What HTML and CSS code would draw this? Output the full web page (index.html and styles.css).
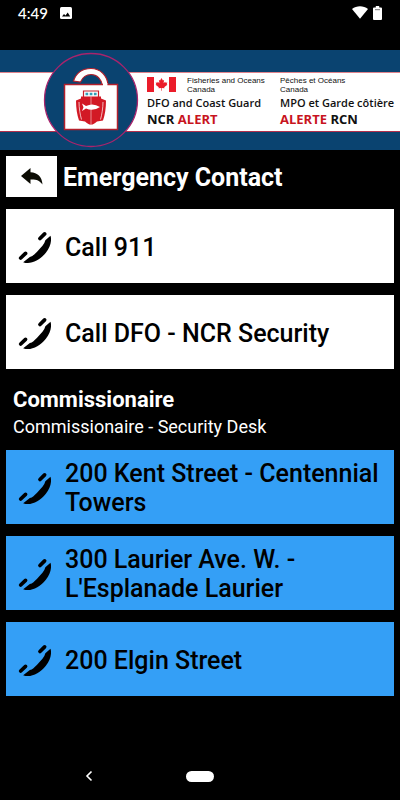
FILE: index.html
```html
<!DOCTYPE html>
<html lang="en">
<head>
    <meta charset="UTF-8">
    <meta name="viewport" content="width=device-width, initial-scale=1.0">
    <title>Emergency Contact</title>
    <link rel="stylesheet" href="styles.css">
</head>
<body>
    <!-- shared icons -->
    <svg class="sprite" aria-hidden="true">
        <symbol id="phone" viewBox="0 0 32 32">
            <path d="M5 30.200 L11.500 25.300 C14 24.500 16 22.500 18.500 20 C22.500 16 25.800 12.500 26.500 9 L31.500 4.500 C33 9 31.500 15.500 27 21 C21 28.500 12 33 5 30.200z"/>
            <path d="M21.300 7.300 L25.800 2.800 M2.600 26.200 L7.300 21.700" stroke="#000" stroke-width="3.600" stroke-linecap="round"/>
        </symbol>
    </svg>

    <div class="status-bar">
        <span class="time">4:49</span>
        <svg class="picture-icon" width="12" height="12" viewBox="0 0 12 12">
            <rect width="12" height="12" rx="1.500" fill="#fff"/>
            <path d="M2 9.500 L4 7 L5.500 8.500 L7.700 5.500 L10.200 9.500z" fill="#000"/>
        </svg>
        <svg class="wifi-icon" width="16" height="13" viewBox="0 0 16 13">
            <path d="M0 3 C4.500 -0.800 11.500 -0.800 16 3 L8 12.800z" fill="#fff"/>
        </svg>
        <svg width="9" height="14" viewBox="0 0 9 14">
            <path d="M1 1.500 H2.800 V0 H6.200 V1.500 H8 Q9 1.500 9 2.500 V13 Q9 14 8 14 H1 Q0 14 0 13 V2.500 Q0 1.500 1 1.500z" fill="#fff"/>
            <path d="M2 3.700 H7" stroke="#777" stroke-width="1"/>
        </svg>
    </div>

    <header class="banner">
        <div class="banner-strip">
            <svg class="emblem" width="96" height="96" viewBox="0 0 96 96">
                <circle cx="48" cy="48" r="46.500" fill="#0a4370" stroke="#a8246c" stroke-width="1.300"/>
                <path d="M65 34 C65 23.500 57 16.500 48 16.500 C39 16.500 33 21.500 30.500 29 L37.500 30 C39.500 25.500 43 22.500 48 22.500 C54 22.500 58.500 27 59.500 34" fill="#fff" stroke="#b3202c" stroke-width="1.200"/>
                <rect x="21.500" y="32.500" width="53" height="45" fill="#fff" stroke="#b3202c" stroke-width="1.500"/>
                <path d="M60 31 H64.400 V36 H60z" fill="#fff"/>
                <path d="M40.500 46 V39 H55.500 V46" fill="#fff" stroke="#c8202b" stroke-width="1.200"/>
                <path d="M42.500 42 H45.200 M46.700 42 H49.400 M50.900 42 H53.600" stroke="#2f9fb8" stroke-width="2.300"/>
                <path d="M33 48.500 L38 46.500 V44.500 H58 V46.500 L63 48.500 C63 56 62 63 60 68.500 L54 69.500 C52 71.500 50 72.500 48 72.800 C46 72.500 44 71.500 42 69.500 L36 68.500 C34 63 33 56 33 48.500z" fill="#d21925"/>
                <path d="M36 50 C36 56 37.200 63 38.500 67.500 M60 50 C60 56 58.800 63 57.500 67.500" fill="none" stroke="#fff" stroke-width="0.700"/>
                <path d="M48 44.500 V73" fill="none" stroke="#fff" stroke-width="0.500"/>
                <path d="M39 51.500 L43 54 Q50 50.500 57 55 Q50 59.800 43 56.500 L39 59 L40.500 55.200z" fill="#fff"/>
            </svg>
            <div class="banner-text" lang="en">
                <div class="department">
                    <svg width="29" height="15" viewBox="0 0 29 15">
                        <path d="M0 0 H7 V15 H0z M22 0 H29 V15 H22z" fill="#eb1c2a"/>
                        <path d="M14.500 1 L15.900 3.600 L17.100 3 L16.600 6.300 L18.200 4.800 L18.600 5.700 L20.300 5.400 L19.700 7.300 L20.400 7.800 L17.200 10.200 L17.500 11.300 L14.800 10.900 V13.800 H14.200 V10.900 L11.500 11.300 L11.800 10.200 L8.600 7.800 L9.300 7.300 L8.700 5.400 L10.400 5.700 L10.800 4.800 L12.400 6.300 L11.900 3 L13.100 3.600z" fill="#eb1c2a"/>
                    </svg>
                    <p>Fisheries and Oceans<br>Canada</p>
                </div>
                <p class="agency">DFO and Coast Guard</p>
                <p class="alert">NCR <span class="red">ALERT</span></p>
            </div>
            <div class="banner-text" lang="fr">
                <div class="department">
                    <p>Pêches et Océans<br>Canada</p>
                </div>
                <p class="agency">MPO et Garde côtière</p>
                <p class="alert"><span class="red">ALERTE</span> RCN</p>
            </div>
        </div>
    </header>

    <main>
        <div class="title-row">
            <button class="back-btn" type="button" aria-label="Back">
                <svg width="22" height="17" viewBox="0 0 22 17">
                    <path d="M0 8 L9.500 0 V4.200 C16.500 4.500 21 8.500 21.500 16.500 C18.500 12.500 15 11.300 9.500 11.600 V16z" fill="#0c0c04"/>
                </svg>
            </button>
            <h1>Emergency Contact</h1>
        </div>

        <div class="contact-list">
            <button class="contact" type="button">
                <svg class="phone-icon"><use href="#phone"/></svg>
                <span>Call 911</span>
            </button>
            <button class="contact" type="button">
                <svg class="phone-icon"><use href="#phone"/></svg>
                <span>Call DFO - NCR Security</span>
            </button>
        </div>

        <div class="section-heading">
            <h2>Commissionaire</h2>
            <p>Commissionaire - Security Desk</p>
        </div>

        <div class="contact-list">
            <button class="contact blue" type="button">
                <svg class="phone-icon"><use href="#phone"/></svg>
                <span>200 Kent Street - Centennial Towers</span>
            </button>
            <button class="contact blue" type="button">
                <svg class="phone-icon"><use href="#phone"/></svg>
                <span>300 Laurier Ave. W. - L'Esplanade Laurier</span>
            </button>
            <button class="contact blue" type="button">
                <svg class="phone-icon"><use href="#phone"/></svg>
                <span>200 Elgin Street</span>
            </button>
        </div>
    </main>

    <nav class="nav-bar">
        <button class="nav-back" type="button" aria-label="System back">
            <svg width="8" height="12" viewBox="0 0 8 12">
                <path d="M6.500 1.500 L2 6 L6.500 10.500" fill="none" stroke="#fff" stroke-width="1.600"/>
            </svg>
        </button>
        <button class="nav-home" type="button" aria-label="Home"></button>
        <span></span>
    </nav>
</body>
</html>
```

FILE: styles.css
```css
* {
    box-sizing: border-box;
}
body {
    margin: 0;
    min-height: 100vh;
    display: flex;
    flex-direction: column;
    background-color: #000;
    color: #fff;
    font-family: Roboto, sans-serif;
}
h1, h2, p {
    margin: 0;
}
button {
    border: none;
    padding: 0;
    font-family: inherit;
    cursor: pointer;
}
.sprite {
    display: none;
}

/* status bar */
.status-bar {
    display: flex;
    align-items: center;
    height: 50px;
    padding: 0 18px 25px;
}
.time {
    font-family: Lato, sans-serif;
    font-size: 15px;
    font-weight: 500;
}
.picture-icon {
    margin-left: 12px;
}
.wifi-icon {
    margin-left: auto;
    margin-right: 5px;
}

/* banner */
.banner {
    padding: 22px 0 18px;
    background-color: #0a4370;
}
.banner-strip {
    display: flex;
    align-items: center;
    height: 60px;
    padding-left: 43px;
    background-color: #fff;
    border-top: 1px solid #e0838c;
    border-bottom: 1px solid #b3304c;
    color: #111;
}
.emblem {
    flex: none;
    margin: -24px 8px -20px 0;
}
.banner-text {
    width: 133px;
    flex: none;
    padding-bottom: 2px;
    white-space: nowrap;
}
.banner-text:last-child {
    width: auto;
}
.department {
    display: flex;
    align-items: center;
    gap: 11px;
    height: 18px;
    font-family: "Liberation Sans", Arial, sans-serif;
    font-size: 8px;
    line-height: 9px;
}
.agency,
.alert {
    font-family: "Open Sans", sans-serif;
}
.agency {
    font-size: 11px;
    font-weight: 600;
    line-height: 18px;
}
.alert {
    font-size: 13px;
    font-weight: 700;
    line-height: 15px;
}
.red {
    color: #c8141e;
}

/* content */
main {
    flex: 1;
    padding: 6px 6px 0;
}
.title-row {
    display: flex;
    align-items: center;
    gap: 6px;
    margin-bottom: 12px;
}
.back-btn {
    display: flex;
    align-items: center;
    justify-content: center;
    width: 51px;
    height: 41px;
    background-color: #fff;
}
h1 {
    padding-top: 2px;
    font-size: 25px;
    font-weight: 700;
    line-height: 29px;
}
.contact-list {
    display: flex;
    flex-direction: column;
    gap: 12px;
}
.contact {
    display: flex;
    align-items: center;
    gap: 14px;
    min-height: 74px;
    padding: 9px 12px 7px;
    background-color: #fff;
    color: #000;
    font-size: 25px;
    font-weight: 500;
    line-height: 29px;
    text-align: left;
}
.contact.blue {
    background-color: #349ff6;
}
.phone-icon {
    flex: none;
    width: 33px;
    height: 33px;
}
.section-heading {
    padding: 17px 7px 11px;
}
h2 {
    font-size: 22px;
    font-weight: 700;
    line-height: 28px;
}
.section-heading p {
    font-size: 18px;
    line-height: 25px;
}

/* system navigation */
.nav-bar {
    display: grid;
    grid-template-columns: 1fr 28px 1fr;
    align-items: center;
    height: 48px;
}
.nav-back {
    justify-self: center;
    display: flex;
    padding-right: 9px;
    background: none;
}
.nav-home {
    height: 11px;
    border-radius: 6px;
    background-color: #fff;
}
```
